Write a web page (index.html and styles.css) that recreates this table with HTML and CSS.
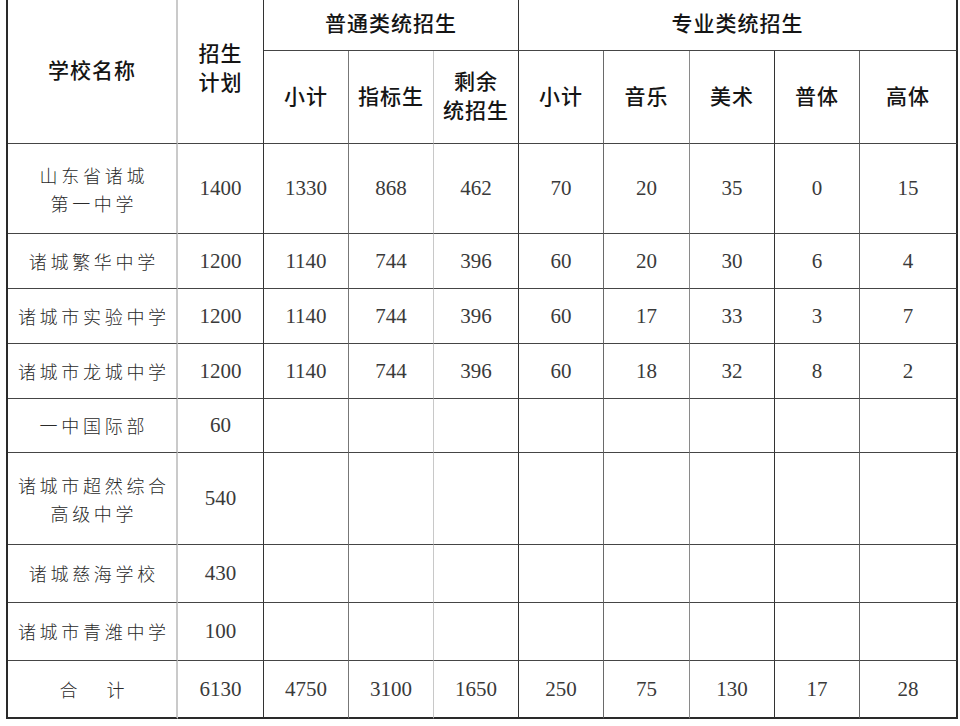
FILE: index.html
```html
<!DOCTYPE html>
<html lang="zh-CN">
<head>
<meta charset="utf-8">
<title>招生计划</title>
<link rel="stylesheet" href="styles.css">
</head>
<body>
<div class="sheet">
  <div class="cell hd c1 span-rows">学校名称</div>
  <div class="cell hd c2 span-rows two">招生<br>计划</div>
  <div class="cell hd group c3">普通类统招生</div>
  <div class="cell hd group c6 edge">专业类统招生</div>

  <div class="cell hd c3">小计</div>
  <div class="cell hd c4">指标生</div>
  <div class="cell hd c5 two">剩余<br>统招生</div>
  <div class="cell hd c6">小计</div>
  <div class="cell hd c7">音乐</div>
  <div class="cell hd c8">美术</div>
  <div class="cell hd c9">普体</div>
  <div class="cell hd c10 edge">高体</div>

  <div class="cell nm c1 two">山东省诸城<br>第一中学</div>
  <div class="cell num c2">1400</div><div class="cell num c3">1330</div><div class="cell num c4">868</div><div class="cell num c5">462</div><div class="cell num c6">70</div><div class="cell num c7">20</div><div class="cell num c8">35</div><div class="cell num c9">0</div><div class="cell num c10 edge">15</div>

  <div class="cell nm c1">诸城繁华中学</div>
  <div class="cell num c2">1200</div><div class="cell num c3">1140</div><div class="cell num c4">744</div><div class="cell num c5">396</div><div class="cell num c6">60</div><div class="cell num c7">20</div><div class="cell num c8">30</div><div class="cell num c9">6</div><div class="cell num c10 edge">4</div>

  <div class="cell nm c1">诸城市实验中学</div>
  <div class="cell num c2">1200</div><div class="cell num c3">1140</div><div class="cell num c4">744</div><div class="cell num c5">396</div><div class="cell num c6">60</div><div class="cell num c7">17</div><div class="cell num c8">33</div><div class="cell num c9">3</div><div class="cell num c10 edge">7</div>

  <div class="cell nm c1">诸城市龙城中学</div>
  <div class="cell num c2">1200</div><div class="cell num c3">1140</div><div class="cell num c4">744</div><div class="cell num c5">396</div><div class="cell num c6">60</div><div class="cell num c7">18</div><div class="cell num c8">32</div><div class="cell num c9">8</div><div class="cell num c10 edge">2</div>

  <div class="cell nm c1">一中国际部</div>
  <div class="cell num c2">60</div><div class="cell num c3"></div><div class="cell num c4"></div><div class="cell num c5"></div><div class="cell num c6"></div><div class="cell num c7"></div><div class="cell num c8"></div><div class="cell num c9"></div><div class="cell num c10 edge"></div>

  <div class="cell nm c1 two">诸城市超然综合<br>高级中学</div>
  <div class="cell num c2">540</div><div class="cell num c3"></div><div class="cell num c4"></div><div class="cell num c5"></div><div class="cell num c6"></div><div class="cell num c7"></div><div class="cell num c8"></div><div class="cell num c9"></div><div class="cell num c10 edge"></div>

  <div class="cell nm c1">诸城慈海学校</div>
  <div class="cell num c2">430</div><div class="cell num c3"></div><div class="cell num c4"></div><div class="cell num c5"></div><div class="cell num c6"></div><div class="cell num c7"></div><div class="cell num c8"></div><div class="cell num c9"></div><div class="cell num c10 edge"></div>

  <div class="cell nm c1">诸城市青潍中学</div>
  <div class="cell num c2">100</div><div class="cell num c3"></div><div class="cell num c4"></div><div class="cell num c5"></div><div class="cell num c6"></div><div class="cell num c7"></div><div class="cell num c8"></div><div class="cell num c9"></div><div class="cell num c10 edge"></div>

  <div class="cell nm c1 last total">合计</div>
  <div class="cell num c2 last">6130</div><div class="cell num c3 last">4750</div><div class="cell num c4 last">3100</div><div class="cell num c5 last">1650</div><div class="cell num c6 last">250</div><div class="cell num c7 last">75</div><div class="cell num c8 last">130</div><div class="cell num c9 last">17</div><div class="cell num c10 edge last">28</div>
</div>
</body>
</html>
```

FILE: styles.css
```css
html, body {
  margin: 0;
  padding: 0;
  background: #ffffff;
}

.sheet {
  margin-left: 6px;
  width: 950px;
  display: grid;
  grid-template-columns: 170px 86px 85px 85px 85px 85px 86px 85px 85px 98px;
  grid-template-rows: 51px 93px 90px 55px 55px 55px 54px 92px 58px 58px 58px;
  border-left: 2px solid #2a2a2a;
  background: #ffffff;
}

.cell {
  box-sizing: border-box;
  display: flex;
  align-items: center;
  justify-content: center;
  text-align: center;
  border-bottom: 1px solid #454545;
  border-right: 1px solid #555555;
}

/* column line shades (as in the scanned sheet) */
.c1 { border-right: 2px solid #cacaca; }
.c2 { border-right-color: #333333; }
.c3 { border-right-color: #777777; }
.c4 { border-right-color: #c8c8c8; }
.c5 { border-right-color: #333333; }
.c6 { border-right-color: #6a6a6a; }
.c7 { border-right-color: #8a8a8a; }
.c8 { border-right-color: #333333; }
.c9 { border-right-color: #666666; }
.edge { border-right: 2px solid #2a2a2a; }

.span-rows { grid-row: span 2; }
.group.c3 { grid-column: 3 / span 3; border-right-color: #333333; }
.group.c6 { grid-column: 6 / span 5; }

.hd {
  font-family: "Noto Sans CJK SC", "Noto Sans", sans-serif;
  font-weight: 500;
  font-size: 21px;
  letter-spacing: 1px;
  color: #151515;
  line-height: 28px;
  padding-bottom: 4px;
}

.hd.group { padding-bottom: 6px; }
.hd.c1 { padding-bottom: 6px; }
.hd.c2 { padding-bottom: 9px; }
.hd.two { line-height: 29px; }

.nm {
  font-family: "Noto Sans CJK SC", "Noto Sans", sans-serif;
  font-weight: 300;
  font-size: 18px;
  letter-spacing: 3.7px;
  padding-left: 3.7px;
  color: #2a2a2a;
  line-height: 27px;
}

.nm.two { line-height: 28px; }

.nm.total {
  letter-spacing: 29px;
  padding-left: 29px;
}

.num {
  font-family: "Liberation Serif", "Times New Roman", serif;
  font-size: 21px;
  color: #3a3a3a;
}

.last { border-bottom: 2px solid #2a2a2a; }
```
